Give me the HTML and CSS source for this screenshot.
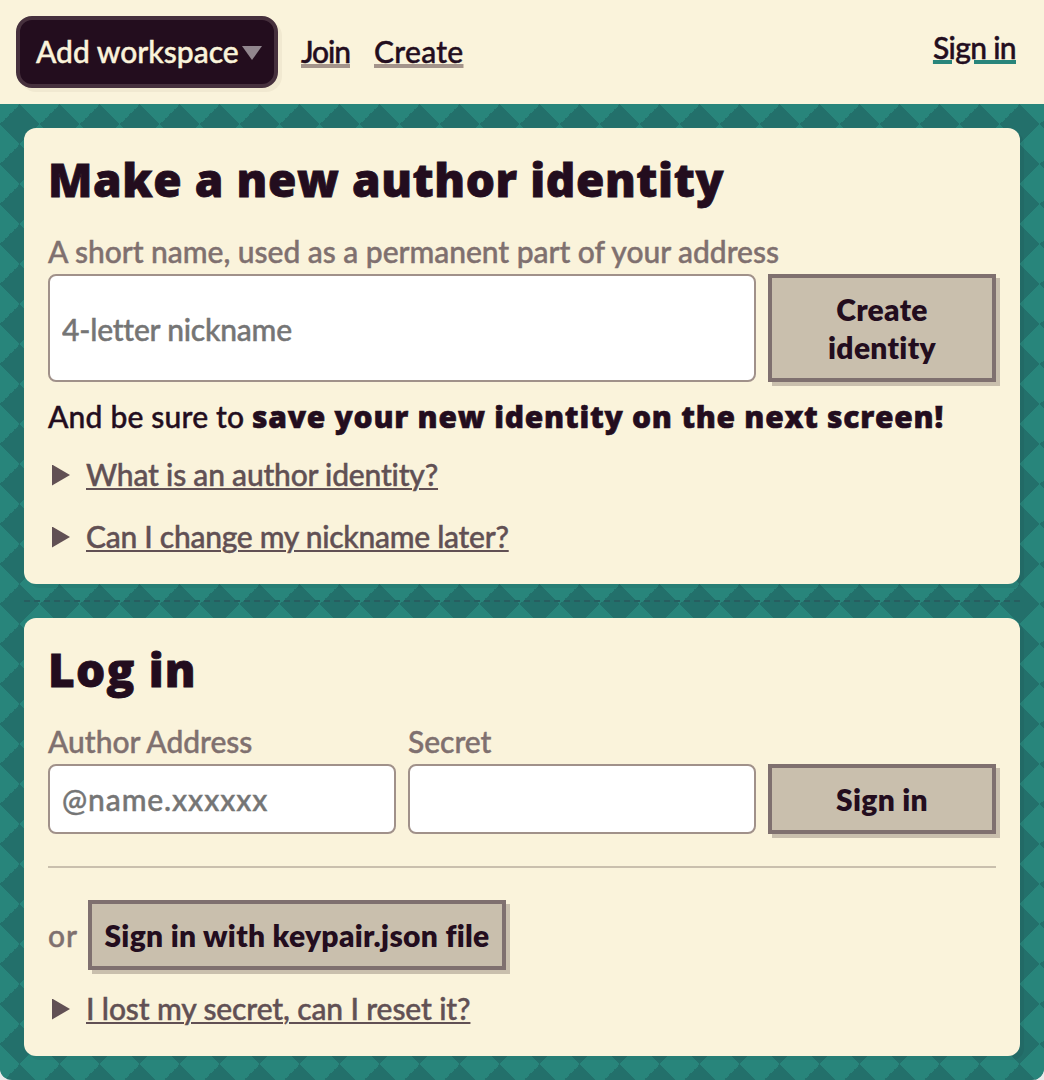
FILE: index.html
```html
<!DOCTYPE html>
<html lang="en">
<head>
<meta charset="utf-8">
<title>Author identity</title>
<link rel="stylesheet" href="styles.css">
</head>
<body>
<div class="app">
  <header class="topbar">
    <button class="workspace" type="button"><span class="workspace-text">Add workspace</span><span class="caret"></span></button>
    <a class="nav-link join">Join</a>
    <a class="nav-link create">Create</a>
    <a class="nav-link signin">Sign in</a>
  </header>
  <main class="content">
    <section class="card">
      <h1 class="title">Make a new author identity</h1>
      <form class="row">
        <label class="field wide"><span class="label">A short name, used as a permanent part of your address</span>
          <input class="input nickname" type="text" placeholder="4-letter nickname"></label>
        <button class="button" type="button">Create<br>identity</button>
      </form>
      <p class="note"><span class="lead">And be sure to </span><strong class="strong">save your new identity on the next screen!</strong></p>
      <div class="question"><span class="marker"></span><span class="question-text q1">What is an author identity?</span></div>
      <div class="question"><span class="marker"></span><span class="question-text q2">Can I change my nickname later?</span></div>
    </section>
    <div class="divider"></div>
    <section class="card">
      <h1 class="title login">Log in</h1>
      <form class="row">
        <label class="field"><span class="label">Author Address</span>
          <input class="input address" type="text" placeholder="@name.xxxxxx"></label>
        <label class="field"><span class="label">Secret</span>
          <input class="input" type="password"></label>
        <button class="button" type="button">Sign in</button>
      </form>
      <div class="rule"></div>
      <div class="keypair"><span class="or">or</span><button class="button file" type="button">Sign in with keypair.json file</button></div>
      <div class="question"><span class="marker"></span><span class="question-text q3">I lost my secret, can I reset it?</span></div>
    </section>
  </main>
</div>
</body>
</html>
```
FILE: styles.css
```css
* { box-sizing: border-box; }
body {
  margin: 0;
  background: #ebebeb;
  color: #230d1e;
  font: 500 30px/38px Lato, "Gill Sans", sans-serif;
  -webkit-text-stroke: 0.45px;
}
button, input { font: inherit; color: inherit; }
.app {
  height: 1080px;
  overflow: hidden;
  border-radius: 0 0 12px 12px;
}
.topbar {
  display: flex;
  align-items: center;
  height: 104px;
  padding: 0 28px 0 16px;
  background: #faf3db;
  white-space: nowrap;
}
.workspace {
  display: flex;
  align-items: center;
  justify-content: space-between;
  width: 262px;
  height: 72px;
  margin-right: 23px;
  padding: 0 12px 0 16px;
  border: 4px solid #46303d;
  border-radius: 16px;
  background: #230d1e;
  box-shadow: 4px 4px #f1e9d1;
  color: #faf3db;
}
.workspace-text { margin-bottom: 2px; }
.caret {
  width: 20px;
  height: 14px;
  margin-top: 2px;
  background: #91868e;
  clip-path: polygon(0 0, 100% 0, 50% 100%);
}
.nav-link {
  margin-bottom: 2px;
  text-decoration: underline #a4948b 4px;
  text-underline-offset: 1px;
}
.join { width: 49px; margin-right: 24px; letter-spacing: -1.1px; }
.create { letter-spacing: 0.3px; }
.signin {
  margin: 0 0 10px auto;
  letter-spacing: -0.65px;
  text-decoration-color: #28857b;
}
.content {
  height: 976px;
  padding: 24px;
  background:
    linear-gradient(45deg, #28857b 25%, transparent 25% 75%, #28857b 75%) 0 0 / 40px 40px,
    linear-gradient(-45deg, #28857b 25%, transparent 25% 75%, #28857b 75%) 0 0 / 40px 40px,
    #23706b;
}
.card {
  padding: 24px 24px 28px;
  border-radius: 12px;
  background: #faf3db;
  box-shadow: 4px 4px rgba(35, 13, 30, 0.06);
}
.title {
  margin: 0 0 26px;
  font: 800 46px/54px "Open Sans", sans-serif;
  letter-spacing: 0.58px;
  white-space: nowrap;
  -webkit-text-stroke: 0.8px;
}
.login { letter-spacing: 1.2px; }
.row {
  display: grid;
  grid-template-columns: 348px 348px 228px;
  column-gap: 12px;
  align-items: end;
}
.field { display: flex; flex-direction: column; gap: 4px; }
.wide { grid-column: span 2; }
.label { color: #7f706f; white-space: nowrap; letter-spacing: -0.03px; }
.input {
  width: 100%;
  height: 70px;
  padding: 0 12px;
  border: 2px solid #a0918a;
  border-radius: 8px;
  background: #fff;
}
.input::placeholder { color: #757575; opacity: 1; }
.nickname { height: 108px; padding-top: 2px; letter-spacing: -0.2px; }
.address { letter-spacing: 0.9px; }
.button {
  padding: 12px;
  border: 4px solid #7f706f;
  border-radius: 0;
  background: #c9bfad;
  box-shadow: 4px 4px #c9bfad;
  font-weight: 800;
  letter-spacing: 0.3px;
  -webkit-text-stroke: 0;
}
.note { margin: 15px 0 20px; white-space: nowrap; }
.lead { letter-spacing: 0.2px; }
.strong {
  font: 800 30px/38px "Open Sans", sans-serif;
  letter-spacing: 0.73px;
  -webkit-text-stroke: 0.6px;
}
.question {
  display: flex;
  align-items: center;
  gap: 16px;
  padding-left: 4px;
  color: #615054;
}
.question + .question { margin-top: 24px; }
.marker {
  width: 18px;
  height: 21px;
  background: #615054;
  clip-path: polygon(0 0, 100% 50%, 0 100%);
}
.question-text {
  margin-bottom: 2px;
  line-height: 36px;
  text-decoration: underline 2px;
  text-underline-offset: 2px;
}
.q1 { letter-spacing: -0.2px; }
.q2 { letter-spacing: -0.27px; }
.q3 { letter-spacing: -0.12px; }
.divider {
  height: 2px;
  margin: 16px 0;
  background: repeating-linear-gradient(90deg, #275e60 0 6px, transparent 6px 10px);
}
.rule { height: 2px; margin: 32px 0; background: #c9bfad; }
.keypair { display: flex; align-items: center; margin-bottom: 20px; }
.or { width: 40px; color: #7f706f; letter-spacing: 1px; }
.file { width: 418px; padding: 12px 0; white-space: nowrap; }
```
